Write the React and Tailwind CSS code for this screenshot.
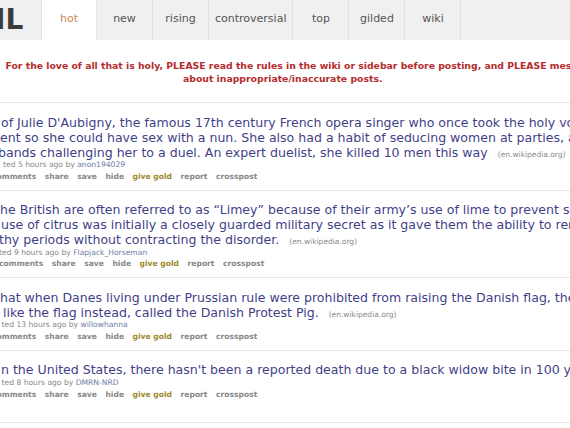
const tabs = ['hot', 'new', 'rising', 'controversial', 'top', 'gilded', 'wiki'];

const posts = [
  {
    lines: [
      { text: "of Julie D'Aubigny, the famous 17th century French opera singer who once took the holy vows to", cls: 'ml-[1px]' },
      { text: 'ent so she could have sex with a nun. She also had a habit of seducing women at parties, and her', cls: 'ml-[0px]' },
      { text: 'bands challenging her to a duel. An expert duelist, she killed 10 men this way', cls: '-ml-[2px]' },
    ],
    tagline: 'ted 5 hours ago by',
    author: 'anon194029',
    tagCls: 'ml-[3px]',
    btnCls: '-ml-[8px]',
  },
  {
    lines: [
      { text: 'he British are often referred to as \u201cLimey\u201d because of their army\u2019s use of lime to prevent scurvy. The', cls: 'ml-[0px]' },
      { text: 'use of citrus was initially a closely guarded military secret as it gave them the ability to remain at sea for', cls: 'ml-[1px]' },
      { text: 'thy periods without contracting the disorder.', cls: '-ml-[1px]' },
    ],
    tagline: 'ted 9 hours ago by',
    author: 'Flapjack_Horseman',
    tagCls: '-ml-[1px]',
    btnCls: '-ml-[1px]',
  },
  {
    lines: [
      { text: 'hat when Danes living under Prussian rule were prohibited from raising the Danish flag, they bred a pig that looked', cls: 'ml-[0px]' },
      { text: 'like the flag instead, called the Danish Protest Pig.', cls: 'ml-[3px]' },
    ],
    tagline: 'ted 13 hours ago by',
    author: 'willowhanna',
    tagCls: 'ml-[1.5px]',
    btnCls: '-ml-[8px]',
  },
  {
    lines: [
      { text: "n the United States, there hasn't been a reported death due to a black widow bite in 100 years.", cls: 'ml-[1px]' },
    ],
    tagline: 'ted 8 hours ago by',
    author: 'DMRN-NRD',
    tagCls: 'ml-[1.5px]',
    btnCls: '-ml-[8px]',
    noDomain: true,
  },
];

function Post({ post }) {
  const last = post.lines.length - 1;
  return (
    <div className="border-t border-[#e6e6e6] pt-[11.5px] pb-[7px] min-h-[72px]">
      <div className="text-[12.55px] leading-[15px] text-[#3f3f88] whitespace-nowrap">
        {post.lines.map((l, i) => (
          <div key={i} className={l.cls}>
            {l.text}
            {i === last && !post.noDomain && (
              <span className="ml-[10px] text-[7.5px] leading-none text-[#888]">(en.wikipedia.org)</span>
            )}
          </div>
        ))}
      </div>
      <div className={`-mt-[0.5px] text-[7.6px] leading-[11.8px] text-[#888] whitespace-nowrap ${post.tagCls}`}>
        {post.tagline} <span className="text-[#6d7da6]">{post.author}</span>
      </div>
      <div className={`flex gap-[8.5px] text-[7.6px] leading-[11.8px] font-bold text-[#888] whitespace-nowrap ${post.btnCls}`}>
        <span>comments</span>
        <span>share</span>
        <span>save</span>
        <span>hide</span>
        <span className="text-[#9c8a2c]">give gold</span>
        <span>report</span>
        <span>crosspost</span>
      </div>
    </div>
  );
}

export default function App() {
  return (
    <div className="w-[570px] h-[428px] overflow-hidden bg-white font-['DejaVu_Sans',sans-serif]">
      {/* header tabs */}
      <div className="flex h-[40px] bg-[#f0f0f0]">
        <div className="w-[41px] shrink-0 overflow-visible">
          <div className="-ml-[24px] text-[28px] leading-[40px] font-bold text-[#3b3b3b] whitespace-nowrap">TIL</div>
        </div>
        {tabs.map((t) => (
          <div
            key={t}
            className={
              t === 'hot'
                ? 'min-w-[56px] px-[6px] pt-[12px] text-center text-[11px] leading-[13px] bg-white text-[#c8874f] border-l border-r border-[#e4e4e4]'
                : 'min-w-[56px] px-[6px] pt-[12px] text-center text-[11px] leading-[13px] text-[#555] border-r border-[#e2e2e2]'
            }
          >
            {t}
          </div>
        ))}
      </div>

      {/* notice */}
      <div className="mt-[18.5px] mb-[17.5px] text-[9.3px] leading-[13px] font-bold text-[#b32d2e] whitespace-nowrap">
        <div className="pl-[5.5px]">
          For the love of all that is holy, PLEASE read the rules in the wiki or sidebar before posting, and PLEASE message the mods
        </div>
        <div className="pl-[183px]">about inappropriate/inaccurate posts.</div>
      </div>

      {posts.map((p, i) => (
        <Post key={i} post={p} />
      ))}
      <div className="border-t border-[#e6e6e6]" />
    </div>
  );
}
